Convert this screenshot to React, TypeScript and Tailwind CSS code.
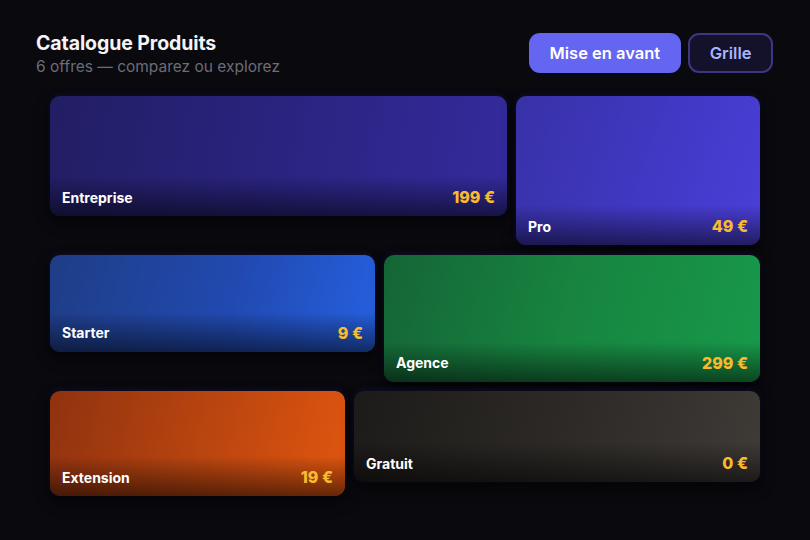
const products = [
  { name: "Entreprise", price: "199 €", w: "w-[457px]", h: "h-[120px]", bg: "bg-[linear-gradient(100deg,#221e63_0%,#2a2480_50%,#332b9c_100%)]" },
  { name: "Pro", price: "49 €", w: "w-[244px]", h: "h-[149px]", bg: "bg-[linear-gradient(110deg,#3831a6_0%,#4138c4_55%,#4a3fd8_100%)]" },
  { name: "Starter", price: "9 €", w: "w-[325px]", h: "h-[97px]", bg: "bg-[linear-gradient(105deg,#1f3d86_0%,#2149b0_55%,#2660e0_100%)]" },
  { name: "Agence", price: "299 €", w: "w-[376px]", h: "h-[127px]", bg: "bg-[linear-gradient(105deg,#156536_0%,#178540_50%,#18994a_100%)]" },
  { name: "Extension", price: "19 €", w: "w-[295px]", h: "h-[105px]", bg: "bg-[linear-gradient(105deg,#8f3210_0%,#b8440f_50%,#e0560f_100%)]" },
  { name: "Gratuit", price: "0 €", w: "w-[406px]", h: "h-[91px]", bg: "bg-[linear-gradient(105deg,#1d1b19_0%,#2c2926_50%,#3f3b37_100%)]" },
];

export default function App() {
  return (
    <div className="min-h-[540px] w-full bg-[#09090e] font-['Inter',sans-serif] text-white">
      {/* Header */}
      <div className="flex items-start justify-between pl-9 pr-[37px] pt-[33px]">
        <div>
          <h1 className="text-[19.5px] font-bold leading-[20px] tracking-[-0.1px] text-[#f4f4f6]">Catalogue Produits</h1>
          <p className="mt-[4px] text-[15.5px] leading-[20px] text-[#6b6d78]">6 offres — comparez ou explorez</p>
        </div>
        <div className="flex gap-[7px]">
          <button className="h-[40px] rounded-[11px] bg-[#6465f1] px-[21px] text-[16.5px] font-semibold text-white">
            Mise en avant
          </button>
          <button className="h-[40px] rounded-[11px] border-2 border-[#3d3680] bg-[#13122a] px-[19.5px] text-[16.5px] font-semibold text-[#aab4fb]">
            Grille
          </button>
        </div>
      </div>

      {/* Cards */}
      <div className="mx-[50px] mt-[19px] flex flex-wrap items-start gap-x-[9px] gap-y-[9.5px]">
        {products.map((p) => (
          <div
            key={p.name}
            className={`relative overflow-hidden rounded-[10px] shadow-[0_-2px_6px_rgba(60,50,160,0.15),0_6px_14px_rgba(0,0,0,0.5)] ${p.w} ${p.h} ${p.bg}`}
          >
            <div className="absolute inset-x-0 bottom-0 flex h-[40px] items-center justify-between bg-linear-to-b from-transparent to-[rgba(0,0,0,0.55)] px-[12px] pb-[4px] pt-[6px]">
              <span className="text-[14px] font-bold text-white">{p.name}</span>
              <span className="text-[16px] font-extrabold text-[#f8bb2e]">{p.price}</span>
            </div>
          </div>
        ))}
      </div>
    </div>
  );
}
